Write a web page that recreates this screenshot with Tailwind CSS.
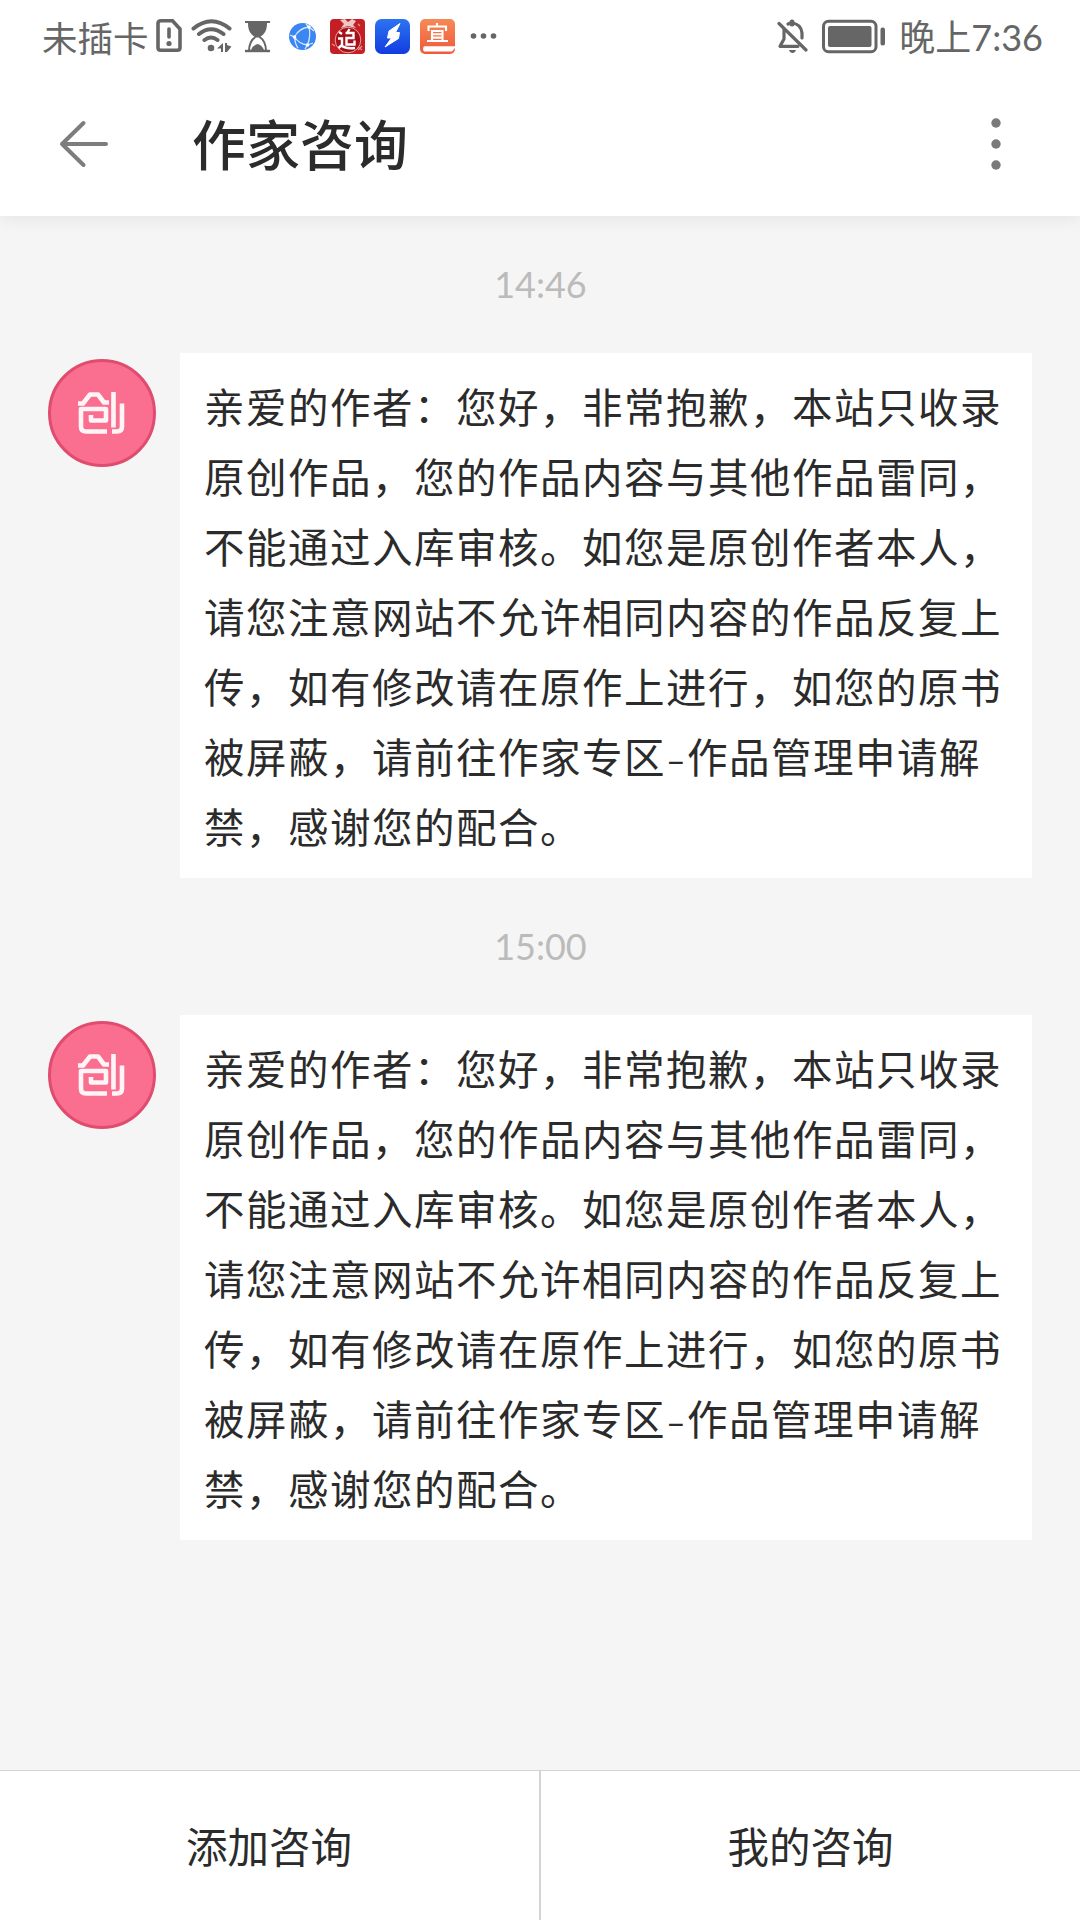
<!DOCTYPE html>
<html lang="zh-CN">

<head>
  <meta charset="UTF-8">
  <meta name="viewport" content="width=device-width, initial-scale=1.0">
  <title>作家咨询</title>
  <script src="https://cdn.jsdelivr.net/npm/@tailwindcss/browser@4"></script>
</head>

<body class="w-[1080px] h-[1920px] overflow-hidden flex flex-col bg-[#f5f5f5] text-[#2b2b2b] font-['Lato','Noto_Sans_CJK_SC',sans-serif]">
  <header class="h-[216px] shrink-0 bg-white relative shadow-[0_2px_16px_rgba(0,0,0,0.08)]">
    <!-- status bar -->
    <div class="h-[72px] pl-[42px] pr-[37px] flex items-center text-[#666] text-[36px] leading-[36px]">
      <span class="w-[114px] pt-px font-['Noto_Sans_CJK_SC',sans-serif] whitespace-nowrap text-[35.5px]">未插卡</span>
      <svg class="w-[26px] h-9 shrink-0" viewBox="156 18 26 36" fill="none" stroke="#666" stroke-width="3.6">
        <path d="M161 20.8H172.5L180 29V47.5Q180 50.2 177.3 50.2H160.7Q158 50.2 158 47.5V23.5Q158 20.8 161 20.8Z" />
        <path d="M169 29V37" stroke-linecap="round" />
        <circle cx="169" cy="43.5" r="2.6" fill="#666" stroke="none" />
      </svg>
      <svg class="w-[42px] h-9 ml-[9px] shrink-0" viewBox="191 18 42 36" fill="none" stroke="#666" stroke-width="4" stroke-linecap="round">
        <path d="M193.5 28.5Q211.5 14 229.5 28.5M199 34Q211 24.5 223.5 34M204.500 40Q211 35 217.500 40" />
        <circle cx="211" cy="48" r="3.3" fill="#666" stroke="none" />
        <path d="M217 48.5L223 43V52H221V48.5ZM225 43H227V45L231.5 46.5L227 52H225Z" fill="#666" stroke="none" />
      </svg>
      <svg class="w-[26px] h-9 ml-3 shrink-0" viewBox="245 18 26 36" fill="none" stroke="#666" stroke-width="2">
        <path d="M245 21H270V23H267C267 30 265 34 260 37H255C250 34 248 30 248 23H245Z" fill="#666" stroke="none" />
        <path d="M249 51Q249 41 256 36.5H259Q266 41 266 51" />
        <path d="M245 51H270" stroke-width="2.4" />
        <path d="M251 50Q253 45 257.5 44Q262 45 264 50Z" fill="#666" stroke="none" />
      </svg>
      <svg class="w-[28px] h-9 ml-[18px] shrink-0" viewBox="289 18 28 36" fill="none" stroke="#d4e7ff" stroke-width="1.3">
        <circle cx="302.5" cy="36.5" r="13.5" fill="#3b86f3" stroke="none" />
        <path d="M306 24L309 27Q299 28 294.500 37Q299 44 307.500 45Q311 36 309 27L314 31M290 35L294.500 37Q295 44 298 48M307.500 45L313 43M307.500 45L305 49" />
        <g fill="#fff" stroke="none">
          <circle cx="309" cy="27" r="1.8" />
          <circle cx="294.5" cy="37" r="1.8" />
          <circle cx="307.5" cy="45" r="1.8" />
        </g>
      </svg>
      <svg class="w-[36px] h-9 ml-[13px] shrink-0" viewBox="330 18 36 36">
        <rect x="330" y="19" width="35" height="35" rx="4" fill="#c51f25" />
        <circle cx="348" cy="40" r="12.8" fill="#a80f18" stroke="#e0a6a0" stroke-width="1" />
        <path d="M340 20L345 19L348 22L352 19L356 21L353 25L356 28L348 26L341 28L344 24Z" fill="#edc7c4" />
        <g fill="none" stroke="#fff" stroke-width="2.4">
          <path d="M339 32L342 34M338 38.5H342V45L338.500 48M342 46Q346 49 355 48" />
          <path d="M349.500 29L347.500 32.500M345.500 33H353.500V38H346.500V44.500H354.500V40.500" />
        </g>
        <path d="M358 47L362 50M362 46L358 50M332 44L335 46M358 24L360 26" stroke="#e78e88" stroke-width="1.2" />
      </svg>
      <svg class="w-[36px] h-9 ml-[9px] shrink-0" viewBox="375 18 36 36">
        <defs>
          <linearGradient id="blue" x1="0" y1="0" x2="0" y2="1">
            <stop offset="0" stop-color="#2c74f2" />
            <stop offset="1" stop-color="#123cdf" />
          </linearGradient>
          <linearGradient id="orange" x1="0" y1="0" x2="0" y2="1">
            <stop offset="0" stop-color="#f58a55" />
            <stop offset="1" stop-color="#f1583a" />
          </linearGradient>
        </defs>
        <rect x="375" y="19" width="35" height="35" rx="6.5" fill="url(#blue)" />
        <path d="M400 23.5L389 31L387.5 38H391.5L385 47L398.5 38.5L399.5 32.5H395.5Z" fill="#fff" stroke="#fff" stroke-linejoin="round" />
      </svg>
      <svg class="w-[36px] h-9 ml-[9px] shrink-0" viewBox="420 18 36 36">
        <rect x="420" y="19" width="35" height="35" rx="5" fill="url(#orange)" />
        <path d="M437 23V27M428.5 31V26.5H446V31M432 41V31H442.5V41M432 34.3H442M432 37.6H442M427 41H448" fill="none" stroke="#fff" stroke-width="2.1" />
        <path d="M424 46.2H455V48L452 51.5H424Q422 49 424 46.2Z" fill="#fff" />
      </svg>
      <svg class="w-[30px] h-9 ml-3 shrink-0" viewBox="467 18 30 36" fill="#666">
        <circle cx="472.5" cy="36" r="2.8" />
        <circle cx="482.5" cy="36" r="2.8" />
        <circle cx="492.5" cy="36" r="2.8" />
      </svg>
      <svg class="w-[32px] h-9 ml-auto shrink-0" viewBox="778 18 32 36" fill="none" stroke="#666" stroke-width="3.2" stroke-linecap="round">
        <path d="M780 23.5L807 50" />
        <path d="M785 30V39L781 46.3H799M789 24Q791 23 793 23Q802 24 803 33V38" stroke-linejoin="round" />
        <path d="M793 24V22" stroke-width="5" />
        <path d="M790 50H797Q796 53 793.5 53Q791 53 790 50Z" fill="#666" stroke="none" />
      </svg>
      <svg class="w-[64px] h-9 ml-[13px] shrink-0" viewBox="823 18 64 36">
        <rect x="824.5" y="21.3" width="52.5" height="30.4" rx="5" fill="none" stroke="#666" stroke-width="3" />
        <rect x="829" y="26" width="43.5" height="21" rx="2" fill="#666" />
        <rect x="881.5" y="27.5" width="4.5" height="18" rx="2" fill="#666" />
      </svg>
      <span class="ml-[13px] pt-[2px] whitespace-nowrap text-[36px]">晚上7:36</span>
    </div>
    <!-- title bar -->
    <div class="h-[144px] pl-[58px] pr-[76px] flex items-center">
      <svg class="w-[52px] h-[52px]" viewBox="0 0 52 52" fill="none" stroke="#7d7d7d" stroke-width="4" stroke-linecap="round" stroke-linejoin="round">
        <path d="M48 26H4M25.5 5L4 26L25.5 47" />
      </svg>
      <h1 class="ml-[82px] pt-[3px] text-[54px] leading-[72px] font-medium whitespace-nowrap">作家咨询</h1>
      <svg class="w-[16px] h-[60px] ml-auto" viewBox="0 0 16 60" fill="#7a7a7a">
        <circle cx="8" cy="9" r="4.7" />
        <circle cx="8" cy="30" r="4.7" />
        <circle cx="8" cy="51" r="4.7" />
      </svg>
    </div>
  </header>

  <main id="messages" class="flex-1 flex flex-col"></main>

  <footer class="h-[150px] shrink-0 flex bg-white border-t border-[#d4d4d4] text-[41.5px]">
    <button class="w-[541px] pt-[4px] pr-px border-r-2 border-[#d4d4d4]">添加咨询</button>
    <button class="flex-1 pt-[4px]">我的咨询</button>
  </footer>

  <template id="message">
    <section>
      <time class="block h-[137px] pt-[46px] pl-px text-center text-[36px] leading-[44px] text-[#bbb]"></time>
      <div class="flex items-start pl-12">
        <svg class="w-[108px] h-[108px] mt-[6px] shrink-0" viewBox="0 0 108 108">
          <circle cx="54" cy="54" r="52.5" fill="#fa6e90" stroke="#e04c6e" stroke-width="3" />
          <g fill="none" stroke="#fff" stroke-opacity=".93" stroke-width="4.6" stroke-linejoin="round">
            <path d="M30 44.5H35L42 35.5H50L56 43.5H61" />
            <path d="M59 72.5H38Q33 72.500 33 67.500V50H58V61.500H43V56" />
            <path d="M65.5 33V68.500M74 44.500V67.500Q74 72.500 69 72.500H64" />
          </g>
        </svg>
        <p class="w-[852px] h-[525px] ml-6 pt-[19.5px] pl-6 bg-white text-[40.5px] leading-[70px] tracking-[1.5px] whitespace-nowrap">
          亲爱的作者：您好，非常抱歉，本站只收录<br>
          原创作品，您的作品内容与其他作品雷同，<br>
          不能通过入库审核。如您是原创作者本人，<br>
          请您注意网站不允许相同内容的作品反复上<br>
          传，如有修改请在原作上进行，如您的原书<br>
          被屏蔽，请前往作家专区<span class="inline-block w-[21px] tracking-normal text-[34px] leading-none">–</span>作品管理申请解<br>
          禁，感谢您的配合。
        </p>
      </div>
    </section>
  </template>
</body>
<script>
  const template = document.querySelector('#message');
  const messages = document.querySelector('#messages');

  ['14:46', '15:00'].forEach((time) => {
    const item = template.content.cloneNode(true);
    item.querySelector('time').textContent = time;
    messages.appendChild(item);
  });
</script>

</html>
